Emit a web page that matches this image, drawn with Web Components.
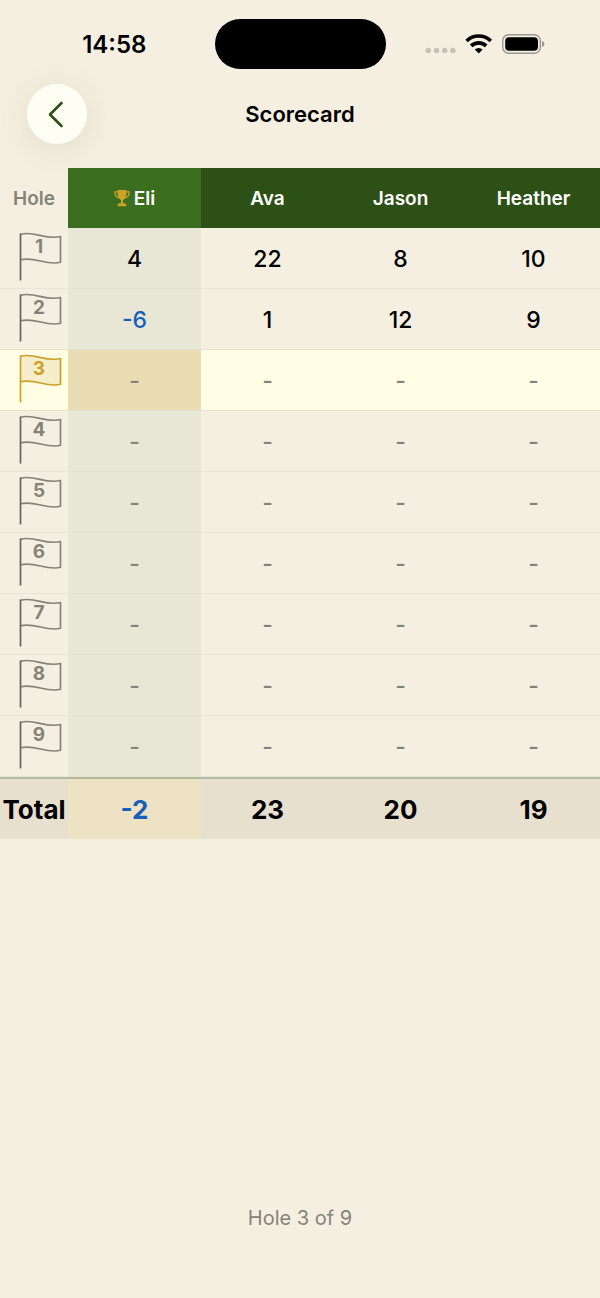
<!DOCTYPE html>
<html lang="en">
<head>
<meta charset="utf-8">
<meta name="viewport" content="width=device-width, initial-scale=1">
<title>Scorecard</title>
<style>
  :root {
    --page: #f5efe1;
    --ink: #000;
    --muted: #858377;
    --gold: #c9a227;
    --green: #2d5016;
    --green-lead: #3b6e1f;
    --under: #1560bd;
  }

  body {
    margin: 0;
    background: var(--page);
    color: var(--ink);
    font-family: Inter, "Liberation Sans", sans-serif;
  }
</style>
</head>
<body>
<score-app>
  <status-bar slot="top">14:58</status-bar>
  <nav-bar slot="top">Scorecard</nav-bar>
  <score-table></score-table>
  <span slot="footer">Hole 3 of 9</span>
</score-app>

<script>
class ScoreApp extends HTMLElement {
  connectedCallback() {
    const shadow = this.attachShadow({ mode: "open" });

    shadow.innerHTML = `
      <style>
        :host {
          display: flex;
          flex-direction: column;
          min-height: 100vh;
        }

        main {
          flex: 1;
          padding-top: 24px;
        }

        footer {
          padding-bottom: 65px;
          color: var(--muted);
          font-size: 20px;
          line-height: 30px;
          text-align: center;
        }
      </style>

      <header><slot name="top"></slot></header>
      <main><slot></slot></main>
      <footer><slot name="footer"></slot></footer>
    `;
  }
}

class StatusBar extends HTMLElement {
  connectedCallback() {
    const shadow = this.attachShadow({ mode: "open" });

    shadow.innerHTML = `
      <style>
        :host {
          display: grid;
          grid-template-columns: 1fr 171px 1fr;
          align-items: center;
          padding: 19px 0 15px;
        }

        .time {
          padding-left: 14px;
          font-size: 24px;
          font-weight: 600;
          line-height: 32px;
          padding-top: 2px;
          text-align: center;
        }

        .island {
          height: 50px;
          border-radius: 25px;
          background: #000;
        }

        .icons {
          display: flex;
          justify-content: center;
          padding-right: 16px;
        }

        svg {
          display: block;
        }
      </style>

      <div class="time"><slot></slot></div>
      <div class="island"></div>
      <div class="icons">
        <svg width="120" height="22" viewBox="0 0 120 22" aria-hidden="true">
          <g fill="#c6c1b4">
            <circle cx="3.3" cy="17.5" r="2.7"/>
            <circle cx="11.5" cy="17.5" r="2.7"/>
            <circle cx="19.7" cy="17.5" r="2.7"/>
            <circle cx="27.9" cy="17.5" r="2.7"/>
          </g>
          <g fill="none" stroke="#000" stroke-width="3.6">
            <path d="M41.600 8a17.200 17.200 0 0 1 24.200 0"/>
            <path d="M46.200 12.900a10.700 10.700 0 0 1 15 0"/>
          </g>
          <path d="M53.7 20.400l-3.900-3.900a5.600 5.600 0 0 1 7.800 0z"/>
          <rect x="77.7" y="1.7" width="37.6" height="18.6" rx="6" fill="none" stroke="#9b978b" stroke-width="1.4"/>
          <rect x="80.2" y="4.2" width="32.8" height="13.6" rx="4"/>
          <path d="M117 8c3.200.9 3.200 5.100 0 6z" fill="#9b978b"/>
        </svg>
      </div>
    `;
  }
}

class NavBar extends HTMLElement {
  connectedCallback() {
    const shadow = this.attachShadow({ mode: "open" });

    shadow.innerHTML = `
      <style>
        :host {
          display: grid;
          grid-template-columns: 60px 1fr 60px;
          align-items: center;
          padding: 0 27px;
        }

        button {
          display: grid;
          place-items: center;
          width: 60px;
          height: 60px;
          padding: 0;
          border: 0;
          border-radius: 50%;
          background: #fffef3;
          box-shadow: 0 4px 32px rgba(60, 60, 30, 0.1);
        }

        h1 {
          margin: 0;
          font-size: 22px;
          font-weight: 600;
          line-height: 30px;
          text-align: center;
        }
      </style>

      <button type="button" aria-label="Back">
        <svg width="28" height="28" viewBox="0 0 28 28" fill="none" stroke="#2d5016" stroke-width="2.6" stroke-linecap="round" stroke-linejoin="round">
          <path d="M18.500 3L7 14.500L18.500 26"/>
        </svg>
      </button>
      <h1><slot></slot></h1>
    `;
  }
}

class HoleFlag extends HTMLElement {
  connectedCallback() {
    const shadow = this.attachShadow({ mode: "open" });

    shadow.innerHTML = `
      <style>
        :host {
          display: grid;
          width: 44px;
          height: 50px;
          margin-left: 18px;
          color: var(--muted);
          --pole: #66655d;
          --cloth: none;
        }

        :host([current]) {
          color: var(--gold);
          --pole: var(--gold);
          --cloth: #f6edca;
        }

        svg,
        span {
          grid-area: 1 / 1;
        }

        span {
          width: 42px;
          font-size: 19px;
          font-weight: 700;
          line-height: 30px;
          text-align: center;
        }
      </style>

      <svg width="44" height="50" viewBox="0 0 44 50" stroke-width="1.7" aria-hidden="true">
        <path d="M2.500 2.200C17 -1.500 27 8.300 42.500 4.500V30.300C28 34 17 24 2.500 27.800" fill="var(--cloth)" stroke="currentColor" stroke-linejoin="round"/>
        <path d="M2.500 1.500V48.500" stroke="var(--pole)"/>
      </svg>
      <span><slot></slot></span>
    `;
  }
}

class TrophyIcon extends HTMLElement {
  connectedCallback() {
    const shadow = this.attachShadow({ mode: "open" });

    shadow.innerHTML = `
      <style>
        :host {
          display: inline-block;
          color: var(--gold);
        }

        svg {
          display: block;
        }
      </style>

      <svg width="16" height="18" viewBox="0 0 16 18" fill="currentColor" aria-hidden="true">
        <path d="M3.300 1.700Q3.300 1 4 1H12Q12.700 1 12.700 1.700C12.700 6.500 11.600 9.500 9 11.200V14.200H10.500Q12.300 14.200 12.300 16V17.200H3.700V16Q3.700 14.200 5.500 14.200H7V11.200C4.400 9.500 3.300 6.500 3.300 1.700Z"/>
        <path d="M3.500 2.900H.9C.7 6 2.500 8.300 5.200 8.900M12.500 2.900H15.100C15.300 6 13.500 8.300 10.800 8.900" fill="none" stroke="currentColor" stroke-width="1.300"/>
      </svg>
    `;
  }
}

class ScoreTable extends HTMLElement {
  connectedCallback() {
    const shadow = this.attachShadow({ mode: "open" });
    const holes = 9;
    const current = 3;
    const players = [
      { name: "Eli", scores: [4, -6] },
      { name: "Ava", scores: [22, 1] },
      { name: "Jason", scores: [8, 12] },
      { name: "Heather", scores: [10, 9] },
    ];

    const totals = players.map((p) => p.scores.reduce((a, b) => a + b, 0));
    const best = Math.min(...totals);
    const lead = (i) => (totals[i] === best ? "lead" : "");
    const under = (n) => (n < 0 ? "under" : "");

    const head = players
      .map((p, i) => `<th scope="col" class="player ${lead(i)}"><span class="name">${lead(i) ? "<trophy-icon></trophy-icon>" : ""}${p.name}</span></th>`)
      .join("");

    let rows = "";
    for (let h = 0; h < holes; h++) {
      const cells = players
        .map((p, i) => {
          const score = p.scores[h];
          const state = score === undefined ? "empty" : under(score);
          return `<td class="${lead(i)} ${state}">${score ?? "-"}</td>`;
        })
        .join("");
      const now = h + 1 === current;
      rows += `<tr class="${now ? "current" : ""}"><th scope="row"><hole-flag ${now ? "current" : ""}>${h + 1}</hole-flag></th>${cells}</tr>`;
    }

    const foot = totals
      .map((t, i) => `<td class="${lead(i)} ${under(t)}">${t}</td>`)
      .join("");

    shadow.innerHTML = `
      <style>
        :host {
          display: block;
        }

        table {
          width: 100%;
          border-spacing: 0;
          table-layout: fixed;
        }

        .holes {
          width: 68px;
        }

        th,
        td {
          box-sizing: border-box;
          padding: 0;
          text-align: center;
        }

        thead th {
          height: 60px;
          color: var(--muted);
          font-size: 19px;
          font-weight: 600;
        }

        thead .player {
          background: var(--green);
          color: #fff;
        }

        thead .lead {
          background: var(--green-lead);
        }

        .name {
          display: flex;
          justify-content: center;
          align-items: center;
          gap: 4px;
        }

        tbody th,
        tbody td {
          height: 61px;
          border-bottom: 1px solid #e9e4d7;
          font-size: 23px;
          font-weight: 500;
        }

        tbody td {
          padding-top: 2px;
        }

        tbody th {
          vertical-align: top;
          padding-top: 4px;
        }

        tbody .lead {
          background: #e8e7d6;
          border-color: #e5e4d3;
        }

        .current th,
        .current td {
          background: #fffee5;
        }

        .current .lead {
          background: #e9dbb2;
        }

        tbody .empty {
          color: var(--muted);
        }

        tfoot th,
        tfoot td {
          height: 62px;
          border-top: 2px solid #b1bc9f;
          background: #e8e0ce;
          font-size: 26px;
          font-weight: 700;
        }

        tfoot .lead {
          background: #ede3c4;
        }

        td.under {
          color: var(--under);
        }
      </style>

      <table>
        <colgroup><col class="holes"><col span="${players.length}"></colgroup>
        <thead><tr><th scope="col">Hole</th>${head}</tr></thead>
        <tbody>${rows}</tbody>
        <tfoot><tr><th scope="row">Total</th>${foot}</tr></tfoot>
      </table>
    `;
  }
}

customElements.define("score-app", ScoreApp);
customElements.define("status-bar", StatusBar);
customElements.define("nav-bar", NavBar);
customElements.define("hole-flag", HoleFlag);
customElements.define("trophy-icon", TrophyIcon);
customElements.define("score-table", ScoreTable);
</script>
</body>
</html>
